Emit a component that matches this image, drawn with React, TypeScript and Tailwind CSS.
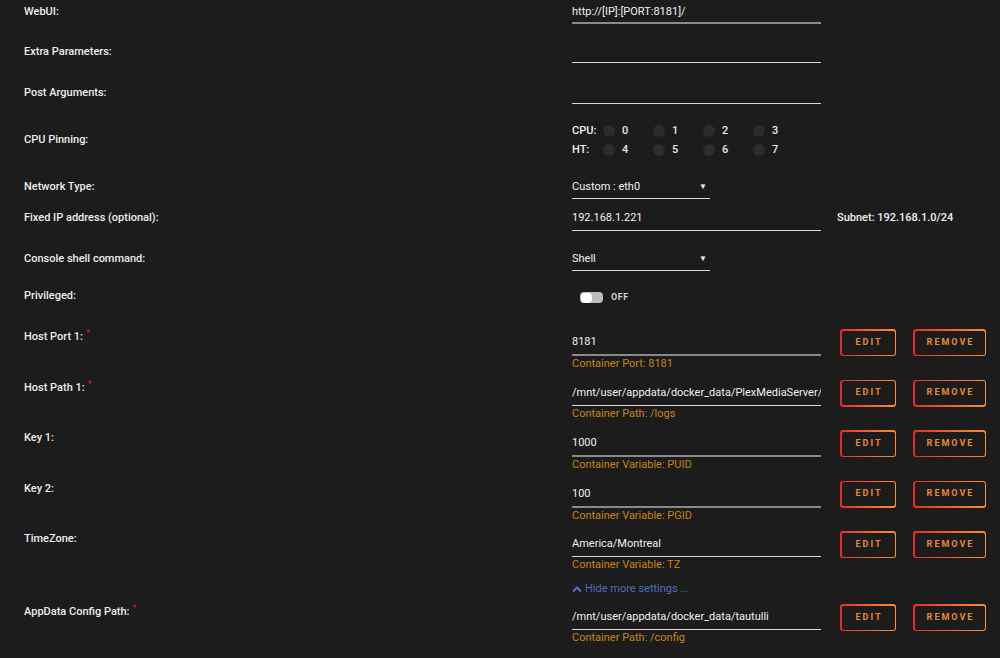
import React from "react";

const SUB = "text-[#c8840f]";

function Req() {
  return <span className="text-[#d01818] text-[9px] relative top-[-4px] ml-[3px]">*</span>;
}

function Label({ children, req, pt }: { children: React.ReactNode; req?: boolean; pt: string }) {
  return (
    <div className={`w-[572px] shrink-0 pl-[24px] leading-4 font-medium text-[#ededed] ${pt}`}>
      {children}
      {req && <Req />}
    </div>
  );
}

function Btn({ text, w }: { text: string; w: string }) {
  return (
    <div className={`h-[27px] ${w} rounded-[3px] p-[1.5px] bg-gradient-to-r from-[#e22828] to-[#ff8c2f]`}>
      <div className="w-full h-full rounded-[2px] bg-[#1c1c1c] flex items-center justify-center text-[9px] font-bold tracking-[2px] text-[#ec8a2c] pl-[2px]">
        {text}
      </div>
    </div>
  );
}

function PortRow({
  label,
  value,
  sub,
  thick,
  fixed = true,
  req = true,
  extra,
}: {
  label: string;
  value: string;
  sub: string;
  thick?: boolean;
  fixed?: boolean;
  req?: boolean;
  extra?: React.ReactNode;
}) {
  return (
    <div className={`flex ${fixed ? "h-[50.5px]" : ""}`}>
      <Label pt="pt-[3px]" req={req}>
        {label}
      </Label>
      <div className="flex flex-col">
        <div className="flex">
          <div className="w-[249px] pt-[8px]">
            <div
              className={`leading-4 pb-[4px] whitespace-nowrap overflow-hidden text-[#f0f0f0] ${
                thick ? "border-b-2 border-[#8a8a8a]" : "border-b border-[#d8d8d8]"
              }`}
            >
              {value}
            </div>
            <div className={`leading-4 ${SUB}`}>{sub}</div>
          </div>
          <div className="flex gap-[17px] ml-[19px] mt-[3px]">
            <Btn text="EDIT" w="w-[56px]" />
            <Btn text="REMOVE" w="w-[73px]" />
          </div>
        </div>
        {extra}
      </div>
    </div>
  );
}

function Circle({ n }: { n: number }) {
  return (
    <div className="w-[50px] flex items-center">
      <div className="w-[12px] h-[12px] rounded-full bg-[#2c2c2c]" />
      <span className="ml-[7px] font-medium text-[#e8e8e8]">{n}</span>
    </div>
  );
}

function Select({ value, pb }: { value: string; pb: string }) {
  return (
    <div className={`w-[138px] flex justify-between items-center leading-4 border-b border-[#d8d8d8] ${pb}`}>
      <span>{value}</span>
      <span className="text-[8px] mr-[3px]">▼</span>
    </div>
  );
}

export default function App() {
  return (
    <div className="w-[1000px] h-[658px] overflow-hidden bg-[#1c1c1c] text-[11px] text-[#f0f0f0] font-['Roboto',sans-serif] pt-[1px]">
      {/* WebUI */}
      <div className="flex h-[41px]">
        <Label pt="pt-[3px]">WebUI:</Label>
        <div className="w-[249px] pt-[3px]">
          <div className="leading-4 pb-[2px] border-b-2 border-[#8a8a8a]">http://[IP]:[PORT:8181]/</div>
        </div>
      </div>
      {/* Extra */}
      <div className="flex h-[40px]">
        <Label pt="pt-[2px]">Extra Parameters:</Label>
        <div className="w-[249px] pt-[2px]">
          <div className="h-[19px] border-b border-[#d8d8d8]" />
        </div>
      </div>
      {/* Post */}
      <div className="flex h-[41px]">
        <Label pt="pt-[3px]">Post Arguments:</Label>
        <div className="w-[249px] pt-[3px]">
          <div className="h-[19px] border-b border-[#d8d8d8]" />
        </div>
      </div>
      {/* CPU */}
      <div className="flex h-[54px]">
        <Label pt="pt-[9px]">CPU Pinning:</Label>
        <div className="flex flex-col gap-[4px] leading-[15px]">
          <div className="flex items-center">
            <span className="w-[31px] font-medium">CPU:</span>
            <Circle n={0} />
            <Circle n={1} />
            <Circle n={2} />
            <Circle n={3} />
          </div>
          <div className="flex items-center">
            <span className="w-[31px] font-medium">HT:</span>
            <Circle n={4} />
            <Circle n={5} />
            <Circle n={6} />
            <Circle n={7} />
          </div>
        </div>
      </div>
      {/* Network */}
      <div className="flex h-[31px]">
        <Label pt="pt-[2px]">Network Type:</Label>
        <div className="pt-[2px]">
          <Select value="Custom : eth0" pb="pb-[3px]" />
        </div>
      </div>
      {/* Fixed IP */}
      <div className="flex h-[41px]">
        <Label pt="pt-[2px]">Fixed IP address (optional):</Label>
        <div className="flex pt-[2px]">
          <div className="w-[249px]">
            <div className="leading-4 pb-[4px] border-b border-[#d8d8d8]">192.168.1.221</div>
          </div>
          <div className="ml-[16px] leading-4 font-medium">Subnet: 192.168.1.0/24</div>
        </div>
      </div>
      {/* Shell */}
      <div className="flex h-[38px]">
        <Label pt="pt-[2px]">Console shell command:</Label>
        <div className="pt-[2px]">
          <Select value="Shell" pb="pb-[3px]" />
        </div>
      </div>
      {/* Privileged */}
      <div className="flex h-[39px]">
        <Label pt="pt-[1px]">Privileged:</Label>
        <div className="flex items-center pt-[2px] h-[19px] ml-[8px]">
          <div className="w-[23px] h-[11px] rounded-[4px] bg-[#bdbdbd] flex items-center p-[1px]">
            <div className="w-[11px] h-[10px] rounded-[4px] bg-white" />
          </div>
          <span className="ml-[8px] text-[9px] font-bold text-[#cfcfcf] tracking-[0.5px]">OFF</span>
        </div>
      </div>
      <PortRow label="Host Port 1:" value="8181" sub="Container Port: 8181" thick />
      <PortRow label="Host Path 1:" value="/mnt/user/appdata/docker_data/PlexMediaServer/logs" sub="Container Path: /logs" />
      <PortRow label="Key 1:" value="1000" sub="Container Variable: PUID" thick req={false} />
      <PortRow label="Key 2:" value="100" sub="Container Variable: PGID" thick req={false} />
      <PortRow
        label="TimeZone:"
        value="America/Montreal"
        sub="Container Variable: TZ"
        fixed={false}
        req={false}
        extra={
          <div className="mt-[8px] leading-4 flex items-center text-[#4a6fbd]">
            <svg width="10" height="8" viewBox="0 0 10 8" className="mr-[3px]">
              <path d="M1 6.5 L5 2.5 L9 6.5" stroke="#4a6fbd" strokeWidth="2.2" fill="none" />
            </svg>
            Hide more settings ...
          </div>
        }
      />
      <div className="pt-[4px]">
        <PortRow label="AppData Config Path:" value="/mnt/user/appdata/docker_data/tautulli" sub="Container Path: /config" />
      </div>
    </div>
  );
}
